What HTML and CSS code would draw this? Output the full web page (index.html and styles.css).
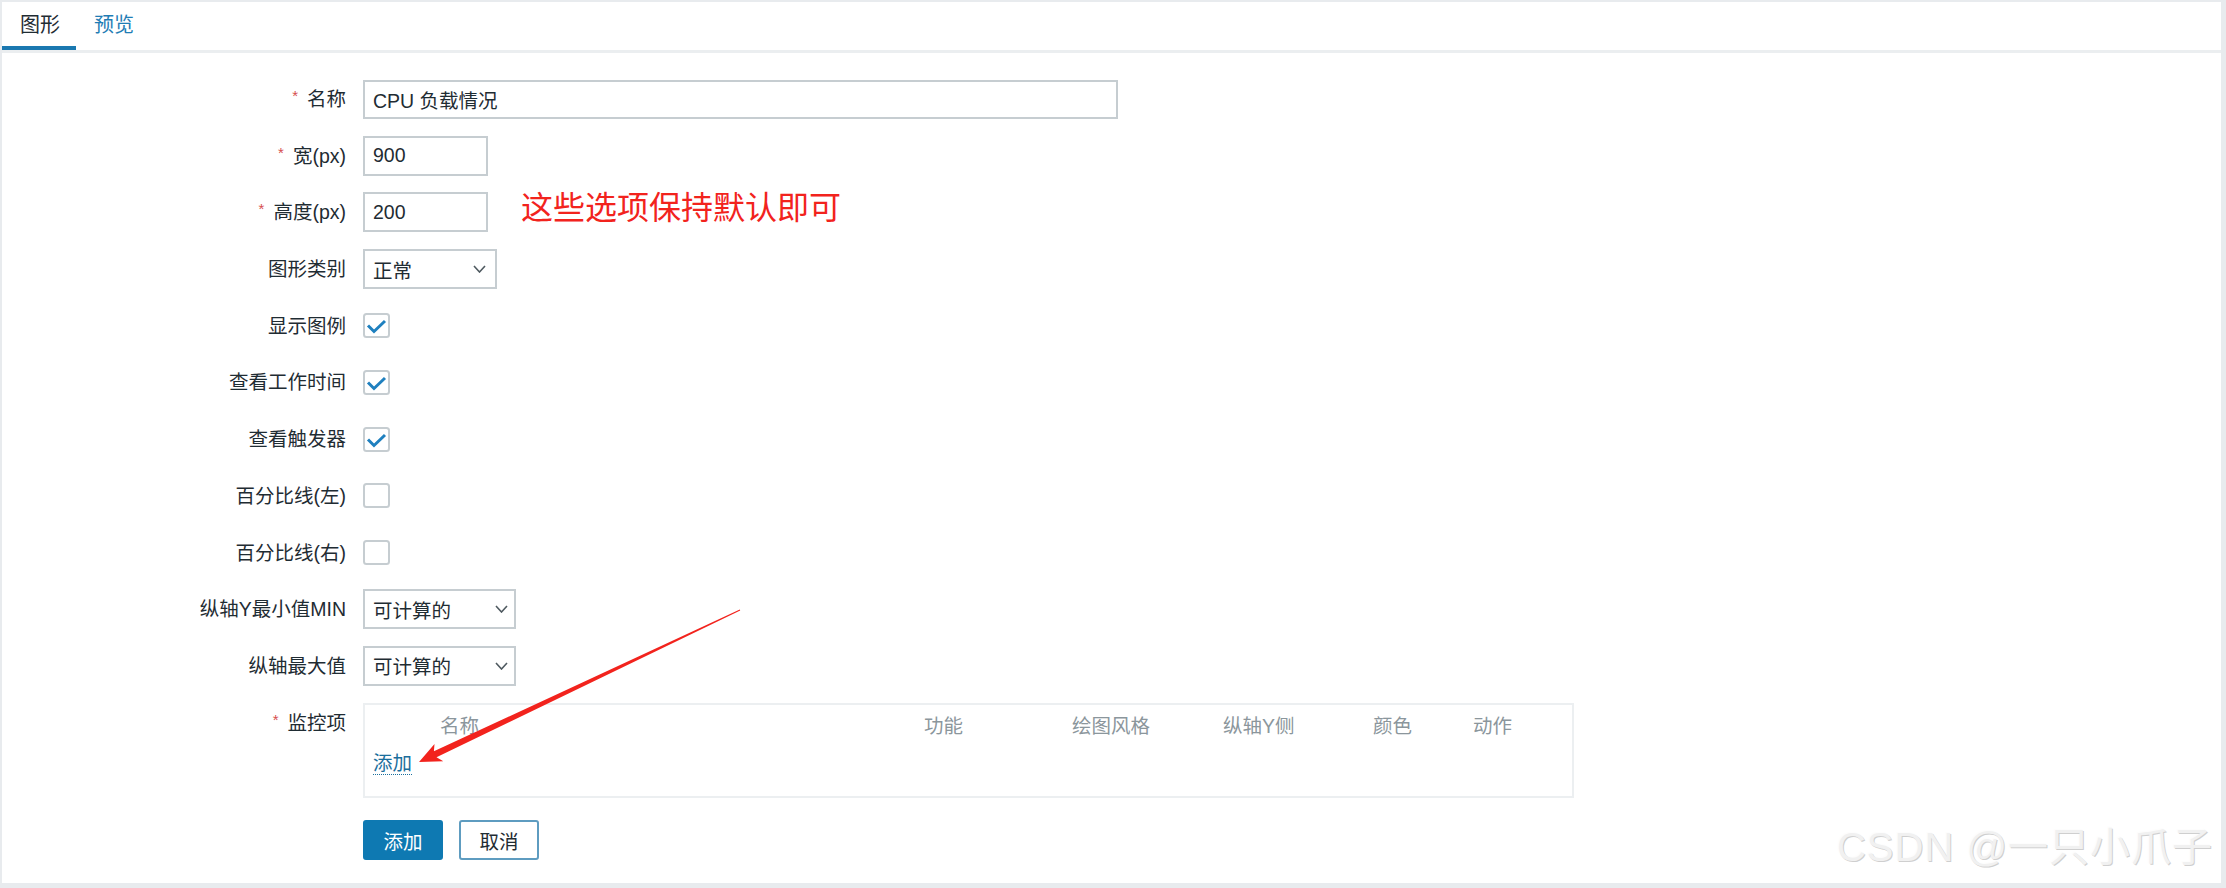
FILE: index.html
```html
<!DOCTYPE html>
<html lang="zh-CN">
<head>
<meta charset="utf-8">
<title>图形</title>
<link rel="stylesheet" href="styles.css">
</head>
<body>
<div class="frame">
  <div class="tabs">
    <span class="tab active">图形</span>
    <span class="tab link">预览</span>
  </div>
  <form class="form">
    <label class="lbl"><span class="req">*</span>名称</label>
    <div class="ctl"><input class="inp name" value="CPU 负载情况"></div>

    <label class="lbl"><span class="req">*</span>宽(px)</label>
    <div class="ctl"><input class="inp num" value="900"></div>

    <label class="lbl"><span class="req">*</span>高度(px)</label>
    <div class="ctl"><input class="inp num" value="200"><span class="note">这些选项保持默认即可</span></div>

    <label class="lbl">图形类别</label>
    <div class="ctl"><div class="sel w1"><span>正常</span><svg class="chev" width="13" height="8" viewBox="0 0 13 8"><polyline points="1,1 6.5,7 12,1" fill="none" stroke="#4f5a60" stroke-width="1.6"/></svg></div></div>

    <label class="lbl">显示图例</label>
    <div class="ctl"><svg class="cb" width="27" height="25" viewBox="0 0 27 25"><rect x="1" y="1" width="25" height="23" rx="2.5" fill="#fff" stroke="#c6cdd1" stroke-width="2"/><polyline points="5,12.5 11,18.5 22,8" fill="none" stroke="#1f80bf" stroke-width="3"/></svg></div>

    <label class="lbl">查看工作时间</label>
    <div class="ctl"><svg class="cb" width="27" height="25" viewBox="0 0 27 25"><rect x="1" y="1" width="25" height="23" rx="2.5" fill="#fff" stroke="#c6cdd1" stroke-width="2"/><polyline points="5,12.5 11,18.5 22,8" fill="none" stroke="#1f80bf" stroke-width="3"/></svg></div>

    <label class="lbl">查看触发器</label>
    <div class="ctl"><svg class="cb" width="27" height="25" viewBox="0 0 27 25"><rect x="1" y="1" width="25" height="23" rx="2.5" fill="#fff" stroke="#c6cdd1" stroke-width="2"/><polyline points="5,12.5 11,18.5 22,8" fill="none" stroke="#1f80bf" stroke-width="3"/></svg></div>

    <label class="lbl">百分比线(左)</label>
    <div class="ctl"><svg class="cb" width="27" height="25" viewBox="0 0 27 25"><rect x="1" y="1" width="25" height="23" rx="2.5" fill="#fff" stroke="#c6cdd1" stroke-width="2"/></svg></div>

    <label class="lbl">百分比线(右)</label>
    <div class="ctl"><svg class="cb" width="27" height="25" viewBox="0 0 27 25"><rect x="1" y="1" width="25" height="23" rx="2.5" fill="#fff" stroke="#c6cdd1" stroke-width="2"/></svg></div>

    <label class="lbl">纵轴Y最小值MIN</label>
    <div class="ctl"><div class="sel w2"><span>可计算的</span><svg class="chev" width="13" height="8" viewBox="0 0 13 8"><polyline points="1,1 6.5,7 12,1" fill="none" stroke="#4f5a60" stroke-width="1.6"/></svg></div></div>

    <label class="lbl">纵轴最大值</label>
    <div class="ctl"><div class="sel w2"><span>可计算的</span><svg class="chev" width="13" height="8" viewBox="0 0 13 8"><polyline points="1,1 6.5,7 12,1" fill="none" stroke="#4f5a60" stroke-width="1.6"/></svg></div></div>

    <label class="lbl top"><span class="req">*</span>监控项</label>
    <div class="items">
      <div class="items-head">
        <span></span>
        <span>名称</span>
        <span>功能</span>
        <span>绘图风格</span>
        <span>纵轴Y侧</span>
        <span>颜色</span>
        <span>动作</span>
      </div>
      <a class="add-link">添加</a>
    </div>

    <span></span>
    <div class="btns">
      <button type="button" class="btn primary">添加</button>
      <button type="button" class="btn sec">取消</button>
    </div>
  </form>
  <div class="watermark">CSDN @一只小爪子</div>
</div>
<svg class="arrow" width="2226" height="888" viewBox="0 0 2226 888">
  <polygon points="740.2,610.4 436.5,757.3 443.3,761.2 419,762 434.5,744 433.9,751.3 739.8,609.6" fill="#f2231d"/>
</svg>
</body>
</html>
```

FILE: styles.css
```css
html, body {
  margin: 0;
}
body {
  padding: 2px 0 0 2px;
  width: 2226px;
  height: 888px;
  box-sizing: border-box;
  overflow: hidden;
  position: relative;
  background: #e8ebee;
  font-family: "Liberation Sans", "Noto Sans CJK SC", sans-serif;
  color: #1f2c33;
}
.frame {
  position: relative;
  width: 2219px;
  height: 881px;
  background: #fff;
}
.tabs {
  display: flex;
  height: 48px;
  border-bottom: 3px solid #ebeef0;
}
.tab {
  padding: 0 16px 0 18px;
  line-height: 47px;
  font-size: 20px;
  border-bottom: 4px solid transparent;
}
.tab.active {
  border-bottom-color: #1a78b0;
  color: #1f2c33;
}
.tab.link {
  color: #1f7db5;
}
.form {
  display: grid;
  grid-template-columns: 344px 1fr;
  column-gap: 17px;
  row-gap: 16.7px;
  padding-top: 26px;
  align-items: center;
  font-size: 19.5px;
}
.lbl {
  text-align: right;
  height: 40px;
  line-height: 40px;
  white-space: nowrap;
}
.lbl.top {
  align-self: start;
}
.req {
  color: #d64e4e;
  font-size: 15px;
  line-height: 0;
  margin-right: 9px;
  vertical-align: 5px;
}
.ctl {
  display: flex;
  align-items: center;
  height: 40px;
}
.inp {
  height: 40px;
  box-sizing: border-box;
  border: 2px solid #c6cdd1;
  padding: 0 8px;
  font: inherit;
  color: inherit;
  background: #fff;
  outline: none;
  margin: 0;
}
.inp.name {
  width: 755px;
  height: 39px;
}
.inp.num {
  width: 125px;
}
.note {
  color: #f2231d;
  font-size: 32px;
  line-height: 32px;
  margin-left: 33px;
  margin-bottom: 8px;
  white-space: nowrap;
}
.sel {
  height: 40px;
  box-sizing: border-box;
  border: 2px solid #c6cdd1;
  display: flex;
  align-items: center;
  justify-content: space-between;
  padding: 0 8px 0 8px;
  background: #fff;
}
.sel.w1 {
  width: 134px;
  padding-right: 9px;
}
.sel.w2 {
  width: 153px;
  padding-right: 6px;
}
.chev {
  display: block;
}
.cb {
  display: block;
}
.items {
  width: 1211px;
  box-sizing: border-box;
  border: 2px solid #eceff1;
  padding: 9px 8px 21px;
}
.items-head {
  display: grid;
  grid-template-columns: 67px 484px 148px 151px 150px 100px auto;
  color: #8b969c;
  line-height: 24px;
}
.add-link {
  display: inline-block;
  margin-top: 14px;
  color: #1a6e9c;
  line-height: 22px;
  border-bottom: 1px dotted #1a6e9c;
  cursor: pointer;
}
.btns {
  display: flex;
  gap: 16px;
  margin-top: 6px;
}
.btn {
  width: 80px;
  height: 40px;
  box-sizing: border-box;
  border-radius: 3px;
  font: inherit;
  display: flex;
  align-items: center;
  justify-content: center;
  padding: 0;
  margin: 0;
}
.btn.primary {
  background: #0e79b2;
  color: #fff;
  border: 2px solid #0e79b2;
}
.btn.sec {
  background: #fff;
  color: #1f2c33;
  border: 2px solid #5e9cc0;
}
.watermark {
  position: absolute;
  right: 8px;
  bottom: 16px;
  font-size: 40px;
  line-height: 40px;
  letter-spacing: 1px;
  color: #f1f1f1;
  text-shadow: 1px 1px 0 #cfcfcf, -1px -1px 0 #fdfdfd;
  white-space: nowrap;
}
.arrow {
  position: absolute;
  left: 0;
  top: 0;
  pointer-events: none;
}
```
